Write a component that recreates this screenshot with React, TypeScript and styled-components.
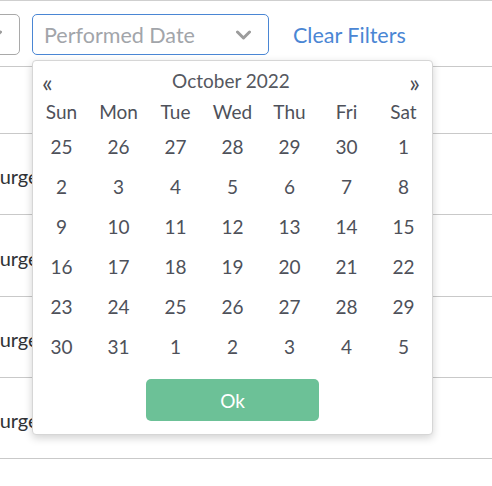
import React from "react";
import styled, { createGlobalStyle } from "styled-components";

const Global = createGlobalStyle`
  html, body { margin: 0; padding: 0; background: #fff; }
  body { font-family: Lato, "Open Sans", sans-serif; overflow: hidden; width: 492px; height: 486px; }
  * { box-sizing: border-box; }
`;

const Page = styled.div`
  position: relative;
  border-top: 1px solid #cfcfcf;
  width: 492px;
  height: 486px;
  overflow: hidden;
`;

const Toolbar = styled.div`
  display: flex;
  align-items: center;
  padding: 13px 0 11px 0;
`;

const SelectBox = styled.div<{ $active?: boolean; $width: number; $offset?: number }>`
  position: relative;
  flex: none;
  width: ${(p) => p.$width}px;
  height: 41px;
  margin-left: ${(p) => p.$offset ?? 0}px;
  margin-right: 12px;
  border: 1px solid ${(p) => (p.$active ? "#4a86d4" : "#a9a9a9")};
  border-radius: 5px;
  display: flex;
  align-items: center;
  justify-content: space-between;
  padding: 0 17px 0 11px;
  font-size: 21.5px;
  color: #a2a5aa;
  background: #fff;
`;

const Chevron = () => (
  <svg width="15" height="10" viewBox="0 0 15 10">
    <polyline points="1.5,2 7.5,8 13.5,2" fill="none" stroke="#9c9c9c" strokeWidth="3" strokeLinecap="round" strokeLinejoin="round" />
  </svg>
);

const ClearLink = styled.a`
  margin-left: 12px;
  font-size: 21.5px;
  color: #4a86d4;
  text-decoration: none;
  cursor: pointer;
`;

const Table = styled.div`
  display: flex;
  flex-direction: column;
`;

const Row = styled.div<{ $height: number }>`
  height: ${(p) => p.$height}px;
  border-top: 1px solid #c9c9c9;
  display: flex;
  align-items: center;
`;

const Cell = styled.div`
  margin-left: -11px;
  width: 43px;
  overflow: hidden;
  white-space: nowrap;
  font-size: 20px;
  color: #2f3236;
  padding-top: 4px;
`;

const Calendar = styled.div`
  position: absolute;
  top: 45px;
  left: -1px;
  width: 401px;
  height: 375px;
  background: #fff;
  border: 1px solid #d6d6d6;
  border-radius: 4px;
  box-shadow: 0 3px 8px rgba(0, 0, 0, 0.18);
  padding: 9px 0 13px 0;
  display: flex;
  flex-direction: column;
  align-items: center;
  z-index: 5;
  cursor: default;
`;

const CalHeader = styled.div`
  width: 100%;
  height: 20px;
  display: flex;
  align-items: center;
  justify-content: space-between;
  padding: 0 12px 0 9px;
  font-size: 19px;
  color: #555860;
`;

const Arrow = styled.span`
  font-size: 25px;
  line-height: 20px;
  color: #4a4d55;
  padding-top: 3px;
`;

const Grid = styled.div`
  margin-top: 7px;
  width: 100%;
  display: grid;
  grid-template-columns: repeat(7, 1fr);
  grid-template-rows: 29px repeat(6, 40px);
`;

const DayName = styled.div`
  display: flex;
  align-items: center;
  justify-content: center;
  font-size: 19px;
  color: #4e515a;
`;

const DateCell = styled.div`
  display: flex;
  align-items: center;
  justify-content: center;
  font-size: 19px;
  color: #4e515a;
`;

const OkButton = styled.button`
  margin-top: 13px;
  width: 173px;
  height: 42px;
  border: none;
  border-radius: 5px;
  background: #6cc197;
  color: #fff;
  font-family: Lato, "Open Sans", sans-serif;
  font-size: 19px;
`;

const days = ["Sun", "Mon", "Tue", "Wed", "Thu", "Fri", "Sat"];
const dates = [
  25, 26, 27, 28, 29, 30, 1,
  2, 3, 4, 5, 6, 7, 8,
  9, 10, 11, 12, 13, 14, 15,
  16, 17, 18, 19, 20, 21, 22,
  23, 24, 25, 26, 27, 28, 29,
  30, 31, 1, 2, 3, 4, 5,
];

export default function App() {
  return (
    <Page>
      <Global />
      <Toolbar>
        <SelectBox $width={120} $offset={-100}>
          <span />
          <Chevron />
        </SelectBox>
        <SelectBox $active $width={237}>
          <span>Performed Date</span>
          <Chevron />
          <Calendar>
            <CalHeader>
              <Arrow>«</Arrow>
              <span>October 2022</span>
              <Arrow>»</Arrow>
            </CalHeader>
            <Grid>
              {days.map((d) => (
                <DayName key={d}>{d}</DayName>
              ))}
              {dates.map((d, i) => (
                <DateCell key={i}>{d}</DateCell>
              ))}
            </Grid>
            <OkButton>Ok</OkButton>
          </Calendar>
        </SelectBox>
        <ClearLink>Clear Filters</ClearLink>
      </Toolbar>
      <Table>
        <Row $height={67} />
        <Row $height={81}><Cell>Surgery</Cell></Row>
        <Row $height={82}><Cell>Surgery</Cell></Row>
        <Row $height={81}><Cell>Surgery</Cell></Row>
        <Row $height={81}><Cell>Surgery</Cell></Row>
        <Row $height={40} />
      </Table>
    </Page>
  );
}
